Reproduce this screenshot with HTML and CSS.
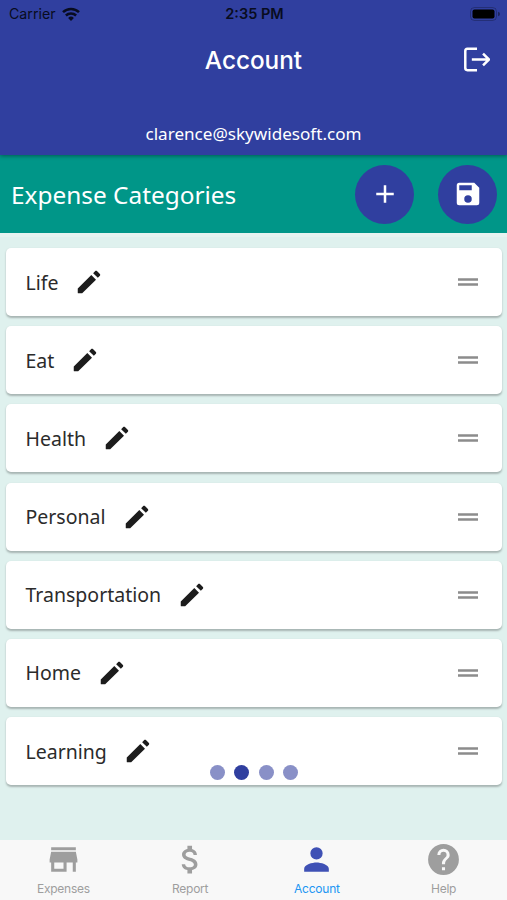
FILE: index.html
```html
<!DOCTYPE html>
<html lang="en">
<head>
<meta charset="utf-8">
<title>Account</title>
<link rel="stylesheet" href="styles.css">
</head>
<body>
<svg class="defs" width="0" height="0">
  <symbol id="pencil" viewBox="0 0 24 24"><path d="M20.71 7.04c.39-.39.39-1.04 0-1.41l-2.34-2.34c-.37-.39-1.02-.39-1.41 0l-1.64 1.63 3.75 3.75M3 17.450V20.500q0 .5.5.5h3.050L17.600 10.130l-3.750-3.750L3 17.250z"/></symbol>
  <symbol id="handle" viewBox="0 0 24 24"><path d="M20 9H4v2h16V9zM4 15h16v-2H4v2z"/></symbol>
</svg>
<div class="screen">
  <header class="header">
    <div class="status">
      <div class="carrier"><span>Carrier</span>
        <svg class="wifi" viewBox="0 0 18 14"><path d="M9 14 6.1 11a4.2 4.2 0 0 1 5.8 0z"/><path d="M3.9 8.5a7.3 7.3 0 0 1 10.2 0M1 5.2a11.5 11.5 0 0 1 16 0" fill="none" stroke="currentColor" stroke-width="2.5"/></svg>
      </div>
      <span class="clock">2:35 PM</span>
      <svg class="battery" viewBox="0 0 30 14"><rect x=".5" y=".5" width="26" height="13" rx="4" fill="none" stroke="currentColor" opacity=".25"/><rect x="2.5" y="2.5" width="22" height="9" rx="2"/><path d="M28 4.8q2 .5 2 2.2t-2 2.2z" opacity=".4"/></svg>
    </div>
    <div class="titlebar">
      <span></span>
      <h1 class="title">Account</h1>
      <svg class="logout" viewBox="0 0 26 24"><path d="M13.500 1.700H4.200Q2.200 1.700 2.200 3.700V20.300q0 2 2 2H13.500M8.500 12H25M19.300 6.300 25 12l-5.700 5.700"/></svg>
    </div>
    <p class="email">clarence@skywidesoft.com</p>
  </header>
  <section class="toolbar">
    <h2 class="heading">Expense Categories</h2>
    <button class="round" aria-label="Add"><svg class="icon" viewBox="0 0 24 24"><path d="M19 13h-6v6h-2v-6H5v-2h6V5h2v6h6z"/></svg></button>
    <button class="round" aria-label="Save"><svg class="icon" viewBox="0 0 24 24"><path d="M15 9H5V5h10m-3 14a3 3 0 1 1 0-6 3 3 0 0 1 0 6m5-16H5a2 2 0 0 0-2 2v14a2 2 0 0 0 2 2h14a2 2 0 0 0 2-2V7l-4-4z"/></svg></button>
  </section>
  <main class="list">
    <div class="card"><span>Life</span><svg class="icon"><use href="#pencil"/></svg><svg class="icon grip"><use href="#handle"/></svg></div>
    <div class="card"><span>Eat</span><svg class="icon"><use href="#pencil"/></svg><svg class="icon grip"><use href="#handle"/></svg></div>
    <div class="card"><span>Health</span><svg class="icon"><use href="#pencil"/></svg><svg class="icon grip"><use href="#handle"/></svg></div>
    <div class="card"><span>Personal</span><svg class="icon"><use href="#pencil"/></svg><svg class="icon grip"><use href="#handle"/></svg></div>
    <div class="card"><span>Transportation</span><svg class="icon"><use href="#pencil"/></svg><svg class="icon grip"><use href="#handle"/></svg></div>
    <div class="card"><span>Home</span><svg class="icon"><use href="#pencil"/></svg><svg class="icon grip"><use href="#handle"/></svg></div>
    <div class="card"><span>Learning</span><svg class="icon"><use href="#pencil"/></svg><svg class="icon grip"><use href="#handle"/></svg></div>
    <div class="dots"><i></i><i class="on"></i><i></i><i></i></div>
  </main>
  <nav class="tabs">
    <div class="tab"><svg class="tabicon" viewBox="0 0 24 24"><path d="M20 4H4v2h16V4zm1 10v-2l-1-5H4l-1 5v2h1v6h10v-6h4v6h2v-6h1zm-9 4H6v-4h6v4z"/></svg><span>Expenses</span></div>
    <div class="tab"><svg class="tabicon" viewBox="0 0 24 24"><path d="M11.800 10.900c-2.270-.59-3-1.200-3-2.150 0-1.090 1.010-1.850 2.700-1.850 1.780 0 2.440.85 2.500 2.100h2.210c-.07-1.720-1.120-3.300-3.210-3.810V3h-3v2.160c-1.940.42-3.500 1.680-3.500 3.610 0 2.310 1.910 3.460 4.700 4.130 2.500.6 3 1.480 3 2.410 0 .69-.49 1.790-2.700 1.790-2.060 0-2.870-.92-2.980-2.100h-2.200c.12 2.190 1.760 3.420 3.680 3.830V21h3v-2.150c1.950-.37 3.500-1.500 3.500-3.550 0-2.840-2.430-3.810-4.700-4.400z"/></svg><span>Report</span></div>
    <div class="tab active"><svg class="tabicon" viewBox="0 0 24 24"><path d="M12 12a4 4 0 1 0 0-8 4 4 0 0 0 0 8zm0 2c-2.670 0-8 1.340-8 4v2h16v-2c0-2.660-5.330-4-8-4z"/></svg><span>Account</span></div>
    <div class="tab"><svg class="tabicon" viewBox="0 0 24 24"><path d="M12 2a10 10 0 1 0 0 20 10 10 0 0 0 0-20zm1 17h-2v-2h2v2zm2.070-7.750-.9.920C13.450 12.900 13 13.500 13 15h-2v-.5c0-1.100.45-2.100 1.170-2.830l1.240-1.260c.37-.36.59-.86.59-1.410a2 2 0 0 0-4 0H8a4 4 0 0 1 8 0c0 .88-.36 1.680-.93 2.250z"/></svg><span>Help</span></div>
  </nav>
</div>
</body>
</html>
```
FILE: styles.css
```css
* { box-sizing: border-box; }
body { margin: 0; font-family: "Noto Sans", sans-serif; }
h1, h2, p { margin: 0; font-weight: 400; }
svg { display: block; fill: currentColor; flex: none; }
.defs { position: absolute; }
.screen { width: 507px; height: 900px; display: flex; flex-direction: column; background: #dff1ee; overflow: hidden; }

.header { position: relative; height: 155px; background: #303f9f; color: #fff; box-shadow: 0 1px 4px rgba(0, 0, 0, .4); }
.status { height: 27px; padding: 0 7px 0 9px; display: grid; grid-template-columns: 1fr auto 1fr; align-items: center; color: #080c20; font: 14.2px Inter, sans-serif; }
.carrier { display: flex; align-items: center; gap: 6px; }
.wifi { width: 18px; height: 14px; }
.clock { font-weight: 600; font-size: 14.5px; }
.battery { width: 30px; height: 14px; justify-self: end; color: #000; }
.titlebar { height: 65px; padding: 0 17px; display: grid; grid-template-columns: 1fr auto 1fr; align-items: center; }
.title { font: 500 24.3px/30px Inter, sans-serif; }
.logout { width: 27px; height: 25px; justify-self: end; fill: none; stroke: #fff; stroke-width: 2.4; }
.email { margin-top: 30px; text-align: center; font-size: 17.1px; line-height: 24px; }

.toolbar { height: 78px; padding: 0 10px 0 11px; display: flex; align-items: center; background: #009688; color: #fff; }
.heading { flex: 1; padding-top: 1px; font-size: 24.4px; line-height: 32px; white-space: nowrap; }
.round { width: 59px; height: 59px; margin-left: 24px; padding: 0; border: 0; border-radius: 50%; background: #303f9f; color: #fff; display: grid; place-items: center; }
.icon { width: 30px; height: 30px; }

.list { position: relative; flex: 1; padding: 11px 5px 0 6px; border-top: 4px solid #e6f3f0; display: flex; flex-direction: column; gap: 10.2px; }
.card { height: 68px; flex: none; padding: 0 19px 0 19.5px; display: flex; align-items: center; background: #fff; border-radius: 5px; box-shadow: 0 1.5px 2px rgba(0, 0, 0, .25); color: #2b2b2b; font-size: 19.5px; }
.card .icon { margin-left: 16px; color: #1c1c1c; }
.card .grip { margin-left: auto; color: #8c8c8c; }
.dots { position: absolute; left: 209.6px; top: 528.4px; display: flex; gap: 9.5px; }
.dots i { width: 15px; height: 15px; border-radius: 50%; background: #8990c7; }
.dots .on { background: #303f9f; }

.tabs { height: 60px; display: grid; grid-template-columns: repeat(4, 1fr); background: #f8f8f8; color: #9e9e9e; font: 12px/16px Inter, sans-serif; letter-spacing: -.25px; }
.tab { display: flex; flex-direction: column; align-items: center; padding-top: 1px; gap: 3px; }
.tabicon { width: 37px; height: 37px; }
.active { color: #2196f3; }
.active .tabicon { color: #3f51b5; }
```
